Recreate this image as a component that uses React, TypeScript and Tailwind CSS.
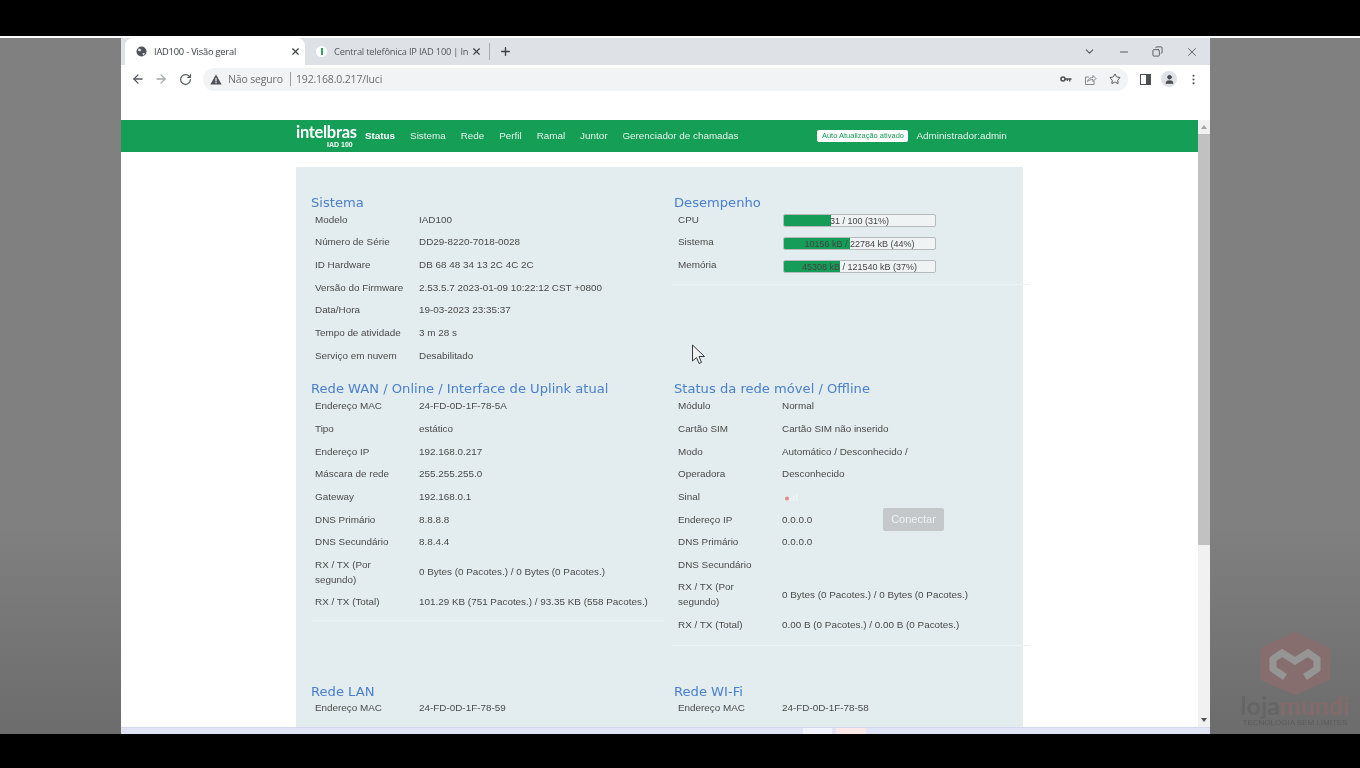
import React from 'react';
import {
  ArrowLeft,
  ArrowRight,
  ChevronDown,
  Copy,
  MoreVertical,
  Minus,
  Plus,
  RotateCw,
  Star,
  User,
  X,
} from 'lucide-react';

type Row = { label: React.ReactNode; value?: React.ReactNode; tall?: boolean };

const sistema: Row[] = [
  { label: 'Modelo', value: 'IAD100' },
  { label: 'Número de Série', value: 'DD29-8220-7018-0028' },
  { label: 'ID Hardware', value: 'DB 68 48 34 13 2C 4C 2C' },
  { label: 'Versão do Firmware', value: '2.53.5.7 2023-01-09 10:22:12 CST +0800' },
  { label: 'Data/Hora', value: '19-03-2023 23:35:37' },
  { label: 'Tempo de atividade', value: '3 m 28 s' },
  { label: 'Serviço em nuvem', value: 'Desabilitado' },
];

const wan: Row[] = [
  { label: 'Endereço MAC', value: '24-FD-0D-1F-78-5A' },
  { label: 'Tipo', value: 'estático' },
  { label: 'Endereço IP', value: '192.168.0.217' },
  { label: 'Máscara de rede', value: '255.255.255.0' },
  { label: 'Gateway', value: '192.168.0.1' },
  { label: 'DNS Primário', value: '8.8.8.8' },
  { label: 'DNS Secundário', value: '8.8.4.4' },
  { label: 'RX / TX (Por segundo)', value: '0 Bytes (0 Pacotes.) / 0 Bytes (0 Pacotes.)', tall: true },
  { label: 'RX / TX (Total)', value: '101.29 KB (751 Pacotes.) / 93.35 KB (558 Pacotes.)' },
];

const SignalIcon = () => (
  <svg width="16" height="9" viewBox="0 0 16 9" className="mt-[2px] block">
    <circle cx="5" cy="5.5" r="2" fill="#e58a8a" />
    <rect x="8" y="5" width="1.5" height="3" fill="#f0f4f4" />
    <rect x="11" y="3" width="1.5" height="5" fill="#f0f4f4" />
    <rect x="14" y="1" width="1.5" height="7" fill="#f0f4f4" />
  </svg>
);

const movel: Row[] = [
  { label: 'Módulo', value: 'Normal' },
  { label: 'Cartão SIM', value: 'Cartão SIM não inserido' },
  { label: 'Modo', value: 'Automático / Desconhecido /' },
  { label: 'Operadora', value: 'Desconhecido' },
  { label: 'Sinal', value: <SignalIcon /> },
  {
    label: 'Endereço IP',
    value: (
      <div className="flex items-center">
        <span className="w-[101px]">0.0.0.0</span>
        <button className="h-[23px] w-[61px] rounded-[2px] bg-[#c4c8cb] text-[11px] text-[#eef1f2]">Conectar</button>
      </div>
    ),
  },
  { label: 'DNS Primário', value: '0.0.0.0' },
  { label: 'DNS Secundário' },
  { label: 'RX / TX (Por segundo)', value: '0 Bytes (0 Pacotes.) / 0 Bytes (0 Pacotes.)', tall: true },
  { label: 'RX / TX (Total)', value: '0.00 B (0 Pacotes.) / 0.00 B (0 Pacotes.)' },
];

const bars = [
  { label: 'CPU', text: '31 / 100 (31%)', pct: 31 },
  { label: 'Sistema', text: '10156 kB / 22784 kB (44%)', pct: 44 },
  { label: 'Memória', text: '45308 kB / 121540 kB (37%)', pct: 37 },
];

const navItems = ['Sistema', 'Rede', 'Perfil', 'Ramal', 'Juntor', 'Gerenciador de chamadas'];

const InfoRows = ({ rows }: { rows: Row[] }) => (
  <div>
    {rows.map((row, i) => (
      <div key={i} className={`flex items-center pl-1 leading-[15px] ${row.tall ? 'h-[37px]' : 'h-[22.67px]'}`}>
        <div className="w-[104px] shrink-0 pr-[10px]">{row.label}</div>
        <div className="min-w-0 flex-1">{row.value}</div>
      </div>
    ))}
  </div>
);

const Heading = ({ children }: { children: React.ReactNode }) => (
  <h3 className="h-[14px] whitespace-nowrap font-['DejaVu_Sans',sans-serif] text-[13.1px] leading-[17px] text-[#4a80cc]">
    {children}
  </h3>
);

const Tab = ({
  active,
  icon,
  title,
}: {
  active?: boolean;
  icon: React.ReactNode;
  title: string;
}) => (
  <div
    className={`flex h-[27px] items-center pl-[11px] pr-[4px] ${
      active ? 'w-[180px] rounded-t-lg bg-white text-[#3c4043]' : 'w-[181px] text-[#54575b]'
    }`}
  >
    {icon}
    <span className="ml-[7px] min-w-0 flex-1 whitespace-nowrap">{title}</span>
    <X size={11} strokeWidth={2.5} className="ml-1 shrink-0 text-[#3c4043]" />
  </div>
);

const GlobeFavicon = () => (
  <svg width="11" height="11" viewBox="0 0 12 12" className="shrink-0">
    <circle cx="6" cy="6" r="5.5" fill="#50545a" />
    <path d="M3 2.5 6 4 4.5 6 2 5zM7 7.5l3 .5-2 2.5z" fill="#dfe1e4" />
  </svg>
);

const WarnIcon = () => (
  <svg width="12" height="11" viewBox="0 0 12 11" className="shrink-0">
    <path d="M6 .5 11.7 10.5H.3z" fill="#4f5256" />
    <path d="M5.4 4h1.2v3.4H5.4zM5.4 8h1.2v1.2H5.4z" fill="#f1f3f4" />
  </svg>
);

const KeyIcon = () => (
  <svg width="12" height="8" viewBox="0 0 12 8">
    <circle cx="3" cy="4" r="2" fill="none" stroke="#4f5256" strokeWidth="1.6" />
    <path d="M5 3.2h6.5v1.6H10.4V6.4H9V4.8H8V6H6.8V4.8H5z" fill="#4f5256" />
  </svg>
);

const ShareIcon = () => (
  <svg width="13" height="13" viewBox="0 0 13 13" fill="none" stroke="#85888c" strokeWidth="1">
    <path d="M5 4H1.5v7.5h8.5V8" />
    <path d="M3.5 8.5C4 5.5 6.5 4.5 9 4.5V2.5l3 3-3 3V6.5c-2 0-4 .5-5.5 2z" />
  </svg>
);

export default function App() {
  return (
    <div className="relative flex h-[768px] w-[1360px] flex-col overflow-hidden bg-black font-['Liberation_Sans',Arial,sans-serif] blur-[0.6px]">
      <div className="h-9 shrink-0" />
      <div className="h-[2px] shrink-0 bg-white" />

      <div className="flex h-[696px] shrink-0 bg-gradient-to-b from-[#808080] from-70% to-[#6c6c6c] pl-[121px]">
        <div className="flex w-[1089px] flex-col overflow-hidden bg-white">
          {/* tab strip */}
          <div className="flex h-[27px] shrink-0 items-center bg-[#dee1e6] pl-1 font-['Open_Sans',sans-serif] text-[9.3px] tracking-[-0.2px]">
            <Tab active icon={<GlobeFavicon />} title="IAD100 - Visão geral" />
            <Tab
              icon={
                <span className="flex h-[11px] w-[11px] shrink-0 items-center justify-center rounded-full bg-white">
                  <span className="h-[7px] w-[2px] bg-[#2aa85f]" />
                </span>
              }
              title="Central telefônica IP IAD 100 | In"
            />
            <div className="ml-[3px] h-[17px] w-px bg-[#a9acb1]" />
            <Plus size={13} strokeWidth={2.5} className="ml-[9px] text-[#3c4043]" />
            <div className="ml-auto flex items-center gap-[22px] pr-[11px] text-[#55585c]">
              <ChevronDown size={13} />
              <Minus size={12} />
              <Copy size={11} className="-scale-x-100" />
              <X size={14} strokeWidth={1.5} />
            </div>
          </div>

          {/* toolbar */}
          <div className="flex h-[27px] shrink-0 items-center pl-[10px] pt-[1px] text-[#55585c]">
            <ArrowLeft size={14} strokeWidth={2.2} />
            <ArrowRight size={14} strokeWidth={2.2} className="ml-[9px] text-[#a6a8ab]" />
            <RotateCw size={13} strokeWidth={2.2} className="ml-[11px]" />
            <div className="ml-[11px] flex h-[23px] w-[925px] items-center rounded-full bg-[#f1f3f4] pl-[7px] pr-[7px] font-['Open_Sans',sans-serif] text-[10.5px] tracking-[-0.15px]">
              <WarnIcon />
              <span className="ml-[6px] mt-[1px] text-[#6b6e72]">Não seguro</span>
              <span className="ml-[7px] h-[14px] w-px bg-[#9b9ea2]" />
              <span className="ml-[5px] mt-[1px] text-[#6b6e72]">192.168.0.217/luci</span>
              <div className="ml-auto flex items-center gap-[12px]">
                <KeyIcon />
                <ShareIcon />
                <Star size={12} strokeWidth={2} className="text-[#4f5256]" />
              </div>
            </div>
            <div className="ml-[12px] h-[11px] w-[11px] border-[1.5px] border-r-[5px] border-[#4b4e52]" />
            <div className="ml-[10px] flex h-[16px] w-[16px] items-center justify-center rounded-full bg-[#e0e2e8]">
              <User size={11} fill="#45484c" stroke="#45484c" />
            </div>
            <MoreVertical size={13} className="ml-[10px]" />
          </div>

          {/* page */}
          <div className="h-[28px] shrink-0" />
          <div className="flex min-h-0 flex-1 overflow-hidden">
            <div className="flex min-w-0 flex-1 flex-col overflow-hidden text-[9.9px] text-[#4a4a4a]">
              <nav className="flex h-[32px] shrink-0 items-center bg-[#149e56] pl-[175px] text-[9.85px] text-[#e4f4ea]">
                <div className="mt-[1px] flex w-[69px] shrink-0 flex-col items-start">
                  <span className="font-['Lato',sans-serif] text-[16.5px] font-bold leading-[15px] tracking-[-0.3px] text-white">
                    intelbras
                  </span>
                  <span className="ml-[31px] text-[7px] font-bold leading-[9px] text-white">IAD 100</span>
                </div>
                <span className="mr-[15px] font-bold text-white">Status</span>
                <div className="flex gap-[15px]">
                  {navItems.map((item) => (
                    <span key={item}>{item}</span>
                  ))}
                </div>
                <span className="ml-[79px] flex h-[12px] w-[91px] items-center justify-center rounded-[2px] bg-white text-[7.5px] text-[#149e56]">
                  Auto Atualização ativado
                </span>
                <span className="ml-[8px]">Administrador:admin</span>
              </nav>

              <div className="ml-[175px] mt-[15px] grid w-[727px] flex-1 grid-cols-[363px_349px] content-start bg-[#e3ecee] pl-[15px]">
                <section className="pt-[27px]">
                  <Heading>Sistema</Heading>
                  <InfoRows rows={sistema} />
                </section>
                <section className="pt-[27px]">
                  <div className="-ml-[2px] mr-[-7px] border-b border-[#edf2f3] pb-[8px] pl-[2px]">
                    <Heading>Desempenho</Heading>
                    {bars.map((bar) => (
                      <div key={bar.label} className="flex h-[22.67px] items-center pl-1 leading-[15px]">
                        <div className="w-[105px] shrink-0">{bar.label}</div>
                        <div className="relative mt-[3px] h-[13px] w-[153px] overflow-hidden rounded-[2px] border border-[#b5babc] bg-[#f0f3f3] text-center text-[9px] leading-[12px] text-[#444]">
                          <div className="absolute inset-y-0 left-0 bg-[#159d57]" style={{ width: `${bar.pct}%` }} />
                          <span className="relative">{bar.text}</span>
                        </div>
                      </div>
                    ))}
                  </div>
                </section>

                <section className="pt-[13px]">
                  <div className="mr-[9px] border-b border-[#edf2f3] pb-[7px]">
                    <Heading>Rede WAN / Online / Interface de Uplink atual</Heading>
                    <div className="mt-[1px]">
                      <InfoRows rows={wan} />
                    </div>
                  </div>
                </section>
                <section className="pt-[13px]">
                  <div className="-ml-[2px] mr-[-7px] border-b border-[#edf2f3] pb-[9px] pl-[2px]">
                    <Heading>Status da rede móvel / Offline</Heading>
                    <div className="mt-[1px]">
                      <InfoRows rows={movel} />
                    </div>
                  </div>
                </section>

                <section className="pt-[37px]">
                  <Heading>Rede LAN</Heading>
                  <InfoRows rows={[{ label: 'Endereço MAC', value: '24-FD-0D-1F-78-59' }]} />
                </section>
                <section className="pt-[37px]">
                  <Heading>Rede WI-Fi</Heading>
                  <InfoRows rows={[{ label: 'Endereço MAC', value: '24-FD-0D-1F-78-58' }]} />
                </section>
              </div>
            </div>

            {/* scrollbar */}
            <div className="flex w-[12px] shrink-0 flex-col items-center bg-[#f1f1f1]">
              <div className="mt-[5px] h-0 w-0 border-x-[3px] border-b-[4px] border-x-transparent border-b-[#a3a3a3]" />
              <div className="mt-[5px] h-[411px] w-full bg-[#c1c1c1]" />
              <div className="mb-[5px] mt-auto h-0 w-0 border-x-[3px] border-t-[4px] border-x-transparent border-t-[#505050]" />
            </div>
          </div>

          {/* taskbar edge */}
          <div className="flex h-[7px] shrink-0 justify-start border-t border-[#d5d9ea] bg-[#e0e4f4] pl-[682px]">
            <div className="h-full w-[29px] bg-[#f1f2fa]" />
            <div className="ml-[4px] h-full w-[30px] bg-[#fbe8e8]" />
          </div>
        </div>
      </div>

      {/* mouse cursor in the recording */}
      <svg className="absolute left-[691px] top-[344px]" width="15" height="22" viewBox="0 0 15 22">
        <path d="M1.5 1v16l4-3.5 2.5 6 2.5-1-2.5-6h5.5z" fill="#eef2f3" stroke="#3a3a3a" strokeWidth="1" />
      </svg>

      {/* channel watermark */}
      <div className="absolute left-[1241px] top-[631px] flex w-[108px] flex-col items-center">
        <svg width="72" height="66" viewBox="0 0 72 66">
          <path d="M36 1 71 17v32L36 64 1 49V17z" fill="#866e6e" />
          <path d="M26 46 14 38V28l9-6 13 8 13-8 9 6v10l-12 8" fill="none" stroke="#959595" strokeWidth="7" />
        </svg>
        <div className="-mt-[4px] font-['Lato',sans-serif] text-[25px] font-bold leading-[24px]">
          <span className="text-[#656565]">loja</span>
          <span className="text-[#836b6b]">mundi</span>
        </div>
        <div className="mt-[2px] whitespace-nowrap text-[8px] leading-[8px] text-[#5c5c5c]">TECNOLOGIA SEM LIMITES</div>
      </div>
    </div>
  );
}
